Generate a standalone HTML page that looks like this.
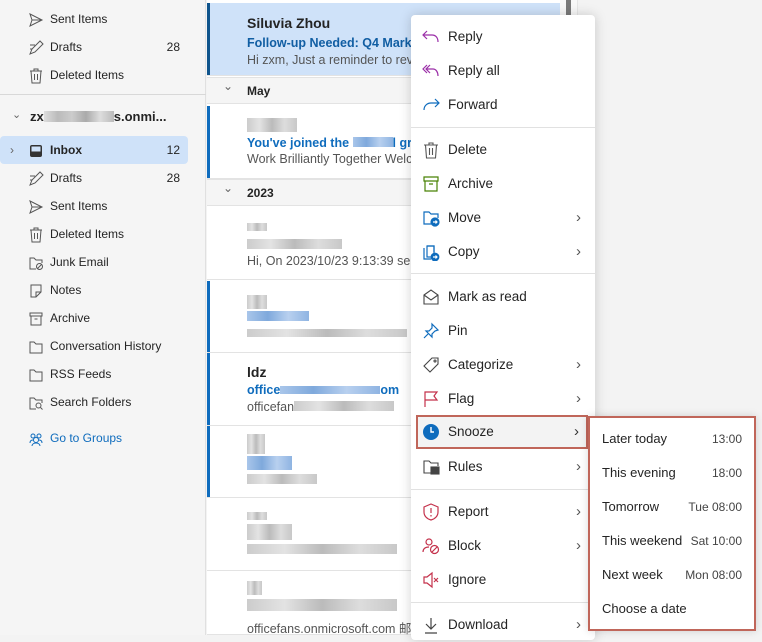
<!DOCTYPE html>
<html><head><meta charset="utf-8"><style>
*{margin:0;padding:0;box-sizing:border-box}
body{width:762px;height:635px;overflow:hidden;position:relative;background:#f3f3f3;font-family:"Liberation Sans","Noto Sans CJK SC",sans-serif;font-size:13px;color:#242424}
.a{position:absolute}
#side{left:0;top:0;width:206px;height:635px;background:#f5f5f5;border-right:1px solid #e0e0e0}
.si{position:absolute;left:0;width:188px;height:28px;line-height:28px;padding-left:50px;font-size:12px}
.si .n{position:absolute;right:8px;top:0}
.si svg{position:absolute;left:28px;top:7px}
#list{left:207px;top:0;width:353px;height:635px;background:#fff}
.hd{position:absolute;left:0;width:353px;height:27px;background:#f5f5f5;line-height:27px;padding-left:40px;font-weight:bold;font-size:12px;border-top:1px solid #e3e3e3;border-bottom:1px solid #e3e3e3}
.hd:before{content:"⌄";position:absolute;left:16px;top:-5px;font-weight:normal;color:#666}
.it{position:absolute;left:0;width:353px;border-bottom:1px solid #e3e3e3}
.bar{position:absolute;left:0;top:0;bottom:0;width:3px;background:#0f6cbd}
.blur{position:absolute;height:8px;background:linear-gradient(90deg,#ccc,#e3e3e3,#bbb,#ddd,#c8c8c8)}
.bb{background:linear-gradient(90deg,#a9c6ea,#7fa9dc,#b8d0ef,#8fb4e2)}
#menu{left:411px;top:15px;width:184px;height:625px;background:#fff;border-radius:4px;box-shadow:0 0 12px rgba(0,0,0,.18)}
.mi{position:absolute;left:0;width:184px;height:34px;line-height:34px;padding-left:37px;font-size:13.5px;color:#242424}
.mi svg{position:absolute;left:11px;top:8px}
.mi .ch{position:absolute;right:14px;top:0;color:#555;font-size:15px}
.sep{position:absolute;left:0;width:184px;height:1px;background:#e1e1e1}
#sub{left:588px;top:416px;width:168px;height:215px;background:#fff;border:2px solid #c0665a;box-shadow:0 0 8px rgba(0,0,0,.15)}
.so{position:absolute;left:12px;width:140px;height:34px;line-height:34px;font-size:13px}
.so span{position:absolute;right:0;font-size:12px;color:#444}
</style></head><body>
<div id="side" class="a">
 <div class="si" style="top:5px"><svg width="16" height="16" fill="none" stroke="#555"><path d="M2 2l12 6-12 6 2-6z M4 8h10"/></svg>Sent Items</div>
 <div class="si" style="top:33px"><svg width="16" height="16" fill="none" stroke="#555"><path d="M2 14l2-5 8-8 3 3-8 8z M2 5h5 M2 9h2"/></svg>Drafts<span class="n">28</span></div>
 <div class="si" style="top:61px"><svg width="16" height="16" fill="none" stroke="#555"><path d="M2 3h12 M6 3V1h4v2 M3 3l1 12h8l1-12 M6.5 6v6 M9.5 6v6"/></svg>Deleted Items</div>
 <div class="a" style="left:0;top:94px;width:206px;height:1px;background:#d8d8d8"></div>
 <div class="a" style="left:12px;top:108px;color:#666;font-size:11px">⌄</div>
 <div class="a" style="left:30px;top:109px;font-weight:bold;font-size:13px">zx<span style="display:inline-block;width:70px;height:11px;background:linear-gradient(90deg,#ddd,#bbb,#ccc,#aaa,#ddd,#bbb);vertical-align:-1px"></span>s.onmi...</div>
 <div class="si" style="top:136px;background:#cfe2f9;border-radius:4px;font-weight:bold"><span class="a" style="left:10px;top:0;font-weight:normal;color:#666">›</span><svg width="16" height="16"><rect x="2" y="2" width="12" height="12" rx="2" fill="#333"/><rect x="3.5" y="3.5" width="9" height="5" fill="#cfe2f9"/></svg>Inbox<span class="n" style="font-weight:normal">12</span></div>
 <div class="si" style="top:164px"><svg width="16" height="16" fill="none" stroke="#555"><path d="M2 14l2-5 8-8 3 3-8 8z M2 5h5 M2 9h2"/></svg>Drafts<span class="n">28</span></div>
 <div class="si" style="top:192px"><svg width="16" height="16" fill="none" stroke="#555"><path d="M2 2l12 6-12 6 2-6z M4 8h10"/></svg>Sent Items</div>
 <div class="si" style="top:220px"><svg width="16" height="16" fill="none" stroke="#555"><path d="M2 3h12 M6 3V1h4v2 M3 3l1 12h8l1-12 M6.5 6v6 M9.5 6v6"/></svg>Deleted Items</div>
 <div class="si" style="top:248px"><svg width="16" height="16" fill="none" stroke="#555"><path d="M8 14H2V3h4l2 2h6v3"/><circle cx="11.5" cy="11.5" r="3"/><path d="M9.5 13.5l4-4"/></svg>Junk Email</div>
 <div class="si" style="top:276px"><svg width="16" height="16" fill="none" stroke="#555"><path d="M3 2h10v7l-5 5H3z M8 14v-5h5"/></svg>Notes</div>
 <div class="si" style="top:304px"><svg width="16" height="16" fill="none" stroke="#555"><path d="M2 2h12v3H2z M3 5v9h10V5 M6.5 8h3"/></svg>Archive</div>
 <div class="si" style="top:332px"><svg width="16" height="16" fill="none" stroke="#555"><path d="M2 3h4l2 2h6v9H2z"/></svg>Conversation History</div>
 <div class="si" style="top:360px"><svg width="16" height="16" fill="none" stroke="#555"><path d="M2 3h4l2 2h6v9H2z"/></svg>RSS Feeds</div>
 <div class="si" style="top:388px"><svg width="16" height="16" fill="none" stroke="#555"><path d="M8 14H2V3h4l2 2h6v3"/><circle cx="10.5" cy="10.5" r="2.5"/><path d="M12.5 12.5l2 2"/></svg>Search Folders</div>
 <div class="si" style="top:424px;color:#0f6cbd"><svg width="16" height="16" fill="none" stroke="#0f6cbd"><circle cx="5" cy="5" r="2"/><circle cx="11" cy="5" r="2"/><circle cx="8" cy="9" r="2.5"/><path d="M2 12c0-2 1-3 3-3 M14 12c0-2-1-3-3-3 M4 15c0-2 2-3 4-3s4 1 4 3"/></svg>Go to Groups</div>
</div>

<div id="list" class="a">
 <div class="it" style="top:3px;height:73px;background:#cfe2f9"><div class="bar" style="background:#0f548c"></div>
  <div class="a" style="left:40px;top:12px;font-weight:bold;font-size:14px">Siluvia Zhou</div>
  <div class="a" style="left:40px;top:33px;font-weight:bold;color:#115ea3;font-size:12.5px;white-space:nowrap">Follow-up Needed: Q4 Marketing</div>
  <div class="a" style="left:40px;top:50px;color:#555;font-size:12.5px;white-space:nowrap">Hi zxm, Just a reminder to review</div></div>
 <div class="hd" style="top:77px">May</div>
 <div class="it" style="top:106px;height:73px"><div class="bar"></div>
  <div class="blur" style="left:40px;top:12px;width:50px;height:14px"></div>
  <div class="a" style="left:40px;top:30px;font-weight:bold;color:#0f6cbd;font-size:12.5px;white-space:nowrap">You've joined the <span class="blur bb" style="position:relative;display:inline-block;width:40px;height:10px"></span>l group</div>
  <div class="a" style="left:40px;top:46px;color:#555;font-size:12.5px;white-space:nowrap">Work Brilliantly Together Welcome</div></div>
 <div class="hd" style="top:179px">2023</div>
 <div class="it" style="top:207px;height:73px">
  <div class="blur" style="left:40px;top:16px;width:20px;height:8px"></div>
  <div class="blur" style="left:40px;top:32px;width:95px;height:10px"></div>
  <div class="a" style="left:40px;top:47px;color:#555;font-size:12.5px;white-space:nowrap">Hi, On 2023/10/23 9:13:39 sent</div></div>
 <div class="it" style="top:281px;height:72px"><div class="bar"></div>
  <div class="blur" style="left:40px;top:14px;width:20px;height:14px"></div>
  <div class="blur bb" style="left:40px;top:30px;width:62px;height:10px"></div>
  <div class="blur" style="left:40px;top:48px;width:160px;height:8px"></div></div>
 <div class="it" style="top:353px;height:73px"><div class="bar"></div>
  <div class="a" style="left:40px;top:11px;font-weight:bold;font-size:14px">ldz</div>
  <div class="a" style="left:40px;top:30px;font-weight:bold;color:#0f6cbd;font-size:12.5px">office<span class="blur bb" style="position:relative;display:inline-block;width:100px;height:8px"></span>om</div>
  <div class="a" style="left:40px;top:47px;color:#555;font-size:12.5px">officefan<span class="blur" style="position:relative;display:inline-block;width:100px;height:10px"></span></div></div>
 <div class="it" style="top:426px;height:72px"><div class="bar"></div>
  <div class="blur" style="left:40px;top:8px;width:18px;height:20px"></div>
  <div class="blur bb" style="left:40px;top:30px;width:45px;height:14px"></div>
  <div class="blur" style="left:40px;top:48px;width:70px;height:10px"></div></div>
 <div class="it" style="top:498px;height:73px">
  <div class="blur" style="left:40px;top:14px;width:20px;height:8px"></div>
  <div class="blur" style="left:40px;top:26px;width:45px;height:16px"></div>
  <div class="blur" style="left:40px;top:46px;width:150px;height:10px"></div></div>
 <div class="it" style="top:571px;height:64px">
  <div class="blur" style="left:40px;top:10px;width:15px;height:14px"></div>
  <div class="blur" style="left:40px;top:28px;width:150px;height:12px"></div>
  <div class="a" style="left:40px;top:47px;color:#555;font-size:12.5px;white-space:nowrap">officefans.onmicrosoft.com 邮件</div></div>
</div>
<div class="a" style="left:560px;top:0;width:18px;height:635px;background:#f8f8f8;border-right:1px solid #e6e6e6"></div>
<div class="a" style="left:566px;top:0;width:5px;height:15px;background:#7a7a7a"></div>

<div id="menu" class="a">
 <div class="mi" style="top:5px"><svg width="18" height="18" fill="none" stroke="#9b2fa8" stroke-width="1.2"><path d="M5 3L1 7l4 4 M1 7h9c4 0 6 3 6 7"/></svg>Reply</div>
 <div class="mi" style="top:39px"><svg width="18" height="18" fill="none" stroke="#9b2fa8" stroke-width="1.2"><path d="M5 3L1 7l4 4 M8 3L4 7l4 4 M4 7h7c3 0 5 3 5 7"/></svg>Reply all</div>
 <div class="mi" style="top:73px"><svg width="18" height="18" fill="none" stroke="#0f6cbd" stroke-width="1.2"><path d="M13 3l4 4-4 4 M17 7H9c-4 0-7 3-7 7"/></svg>Forward</div>
 <div class="sep" style="top:112px"></div>
 <div class="mi" style="top:118px"><svg width="18" height="18" fill="none" stroke="#555" stroke-width="1.1"><path d="M2 4h14 M7 4V2h4v2 M3.5 4l1 13h9l1-13 M7.5 7v7 M10.5 7v7"/></svg>Delete</div>
 <div class="mi" style="top:152px"><svg width="18" height="18" fill="none" stroke="#498205" stroke-width="1.2"><path d="M2 2h14v4H2z M3 6v10h12V6 M7 9h4"/></svg>Archive</div>
 <div class="mi" style="top:186px"><svg width="18" height="18" fill="none" stroke="#0f6cbd" stroke-width="1.2"><path d="M9 15H2V3h5l2 2h7v4"/><circle cx="13" cy="13" r="4" fill="#0f6cbd"/><path d="M11 13h4 M13.5 11.5L15 13l-1.5 1.5" stroke="#fff"/></svg>Move<span class="ch">›</span></div>
 <div class="mi" style="top:220px"><svg width="18" height="18" fill="none" stroke="#0f6cbd" stroke-width="1.2"><path d="M5 3h7v6 M2 5v11h7"/><rect x="5" y="3" width="7" height="11"/><circle cx="13" cy="14" r="3.8" fill="#0f6cbd"/><path d="M11 14h4 M13.5 12.5L15 14l-1.5 1.5" stroke="#fff"/></svg>Copy<span class="ch">›</span></div>
 <div class="sep" style="top:258px"></div>
 <div class="mi" style="top:265px"><svg width="18" height="18" fill="none" stroke="#444" stroke-width="1.1"><path d="M2 7l7-5 7 5v9H2z M2 7l7 5 7-5"/></svg>Mark as read</div>
 <div class="mi" style="top:299px"><svg width="18" height="18" fill="none" stroke="#0f6cbd" stroke-width="1.2"><path d="M10 2l6 6-3 1-3 3 0 3-6-6 3 0 3-3z M6 12l-4 4"/></svg>Pin</div>
 <div class="mi" style="top:333px"><svg width="18" height="18" fill="none" stroke="#444" stroke-width="1.1"><path d="M10 2h6v6l-8 8-6-6z"/><circle cx="13" cy="5" r="1"/></svg>Categorize<span class="ch">›</span></div>
 <div class="mi" style="top:367px"><svg width="18" height="18" fill="none" stroke="#c4314b" stroke-width="1.2"><path d="M3 17V2h12l-3 4 3 4H3"/></svg>Flag<span class="ch">›</span></div>
 <div class="mi" style="top:400px;left:5px;width:172px;border:2px solid #c0665a;background:#f3f3f3;padding-left:30px;line-height:30px"><svg width="18" height="18" style="left:4px;top:6px"><circle cx="9" cy="9" r="8" fill="#0f6cbd"/><path d="M9 4v5h3" stroke="#fff" stroke-width="1.4" fill="none"/></svg>Snooze<span class="ch" style="right:7px;color:#333">›</span></div>
 <div class="mi" style="top:435px"><svg width="18" height="18" fill="none" stroke="#444" stroke-width="1.1"><path d="M9 15H2V3h5l2 2h7v3"/><rect x="9" y="9" width="8" height="7" fill="#444"/></svg>Rules<span class="ch">›</span></div>
 <div class="sep" style="top:474px"></div>
 <div class="mi" style="top:480px"><svg width="18" height="18" fill="none" stroke="#c4314b" stroke-width="1.2"><path d="M9 1l7 3v5c0 4-3 7-7 8-4-1-7-4-7-8V4z M9 5v5 M9 12v1.5"/></svg>Report<span class="ch">›</span></div>
 <div class="mi" style="top:514px"><svg width="18" height="18" fill="none" stroke="#c4314b" stroke-width="1.2"><circle cx="7" cy="5" r="3"/><path d="M1 15c0-3 2-5 6-5"/><circle cx="12.5" cy="12.5" r="4"/><path d="M9.5 15.5l6-6"/></svg>Block<span class="ch">›</span></div>
 <div class="mi" style="top:548px"><svg width="18" height="18" fill="none" stroke="#c4314b" stroke-width="1.2"><path d="M2 6h3l5-4v14l-5-4H2z M12 7l4 4 M16 7l-4 4"/></svg>Ignore</div>
 <div class="sep" style="top:587px"></div>
 <div class="mi" style="top:593px"><svg width="18" height="18" fill="none" stroke="#444" stroke-width="1.2"><path d="M9 2v11 M4 8l5 5 5-5 M3 17h12"/></svg>Download<span class="ch">›</span></div>
</div>

<div id="sub" class="a">
 <div class="so" style="top:4px">Later today<span>13:00</span></div>
 <div class="so" style="top:38px">This evening<span>18:00</span></div>
 <div class="so" style="top:72px">Tomorrow<span>Tue 08:00</span></div>
 <div class="so" style="top:106px">This weekend<span>Sat 10:00</span></div>
 <div class="so" style="top:140px">Next week<span>Mon 08:00</span></div>
 <div class="so" style="top:174px">Choose a date</div>
</div>
</body></html>
